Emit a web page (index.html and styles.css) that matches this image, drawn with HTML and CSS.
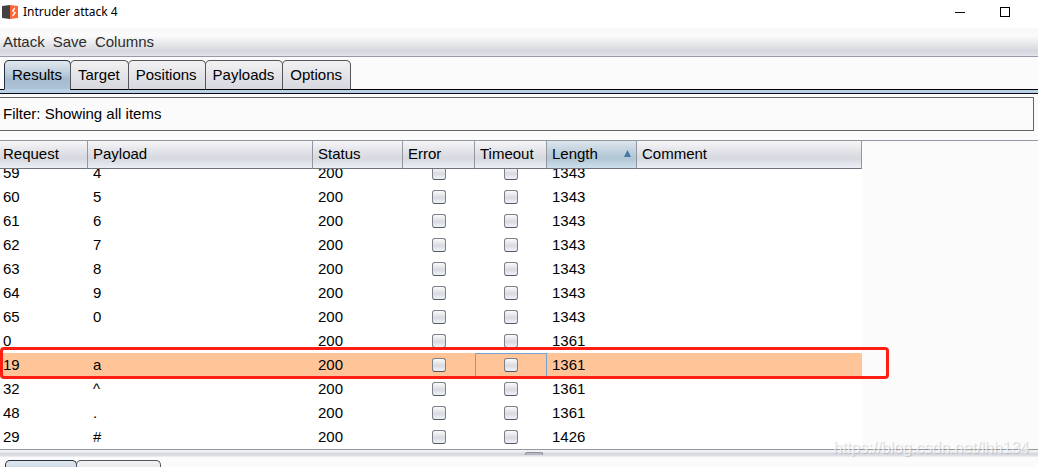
FILE: index.html
```html
<!DOCTYPE html>
<html lang="en">
<head>
<meta charset="utf-8">
<title>Intruder attack 4</title>
<link rel="stylesheet" href="styles.css">
</head>
<body>
<div class="window">
  <header class="titlebar">
    <svg class="logo" width="16" height="14" viewBox="0 0 16 14" aria-hidden="true">
      <path d="M0 1 8 0V14L0 13Z" fill="#434142"/>
      <path d="M8 0 16 1V13L8 14Z" fill="#ff6633"/>
      <path d="M12.5 2 9.8 6.2 12.2 7.2 10.6 9.2V12L14.2 7.4 11.4 6.2 13 4Z" fill="#fff"/>
    </svg>
    <h1 class="title">Intruder attack 4</h1>
    <div class="controls">
      <button class="control" aria-label="Minimize"><svg width="10" height="10"><path d="M0 5.5H10" stroke="#000"/></svg></button>
      <button class="control" aria-label="Maximize"><svg width="10" height="10"><rect x=".5" y=".5" width="9" height="9" fill="none" stroke="#000"/></svg></button>
    </div>
  </header>
  <nav class="menubar">
    <button class="menu">Attack</button>
    <button class="menu">Save</button>
    <button class="menu">Columns</button>
  </nav>
  <div class="tabs" role="tablist">
    <button class="tab selected" role="tab" aria-selected="true">Results</button>
    <button class="tab" role="tab">Target</button>
    <button class="tab" role="tab">Positions</button>
    <button class="tab" role="tab">Payloads</button>
    <button class="tab" role="tab">Options</button>
  </div>
  <button class="filter">Filter: Showing all items</button>
  <main class="results">
    <table class="grid">
      <colgroup><col class="c-request"><col class="c-payload"><col class="c-status"><col class="c-flag"><col class="c-flag"><col class="c-length"><col class="c-comment"></colgroup>
      <thead>
        <tr><th>Request</th><th>Payload</th><th>Status</th><th>Error</th><th>Timeout</th><th class="sorted" aria-sort="ascending"><span class="sort">Length<svg width="7" height="7" aria-hidden="true"><path d="M3.5 0 7 7H0Z" fill="#4377a8"/></svg></span></th><th>Comment</th></tr>
      </thead>
      <tbody>
        <tr class="clipped"><td><div class="clip">59</div></td><td><div class="clip">4</div></td><td><div class="clip">200</div></td><td><div class="clip flag"><input type="checkbox" aria-label="Error"></div></td><td><div class="clip flag"><input type="checkbox" aria-label="Timeout"></div></td><td><div class="clip">1343</div></td><td></td></tr>
        <tr><td>60</td><td>5</td><td>200</td><td class="flag"><input type="checkbox" aria-label="Error"></td><td class="flag"><input type="checkbox" aria-label="Timeout"></td><td>1343</td><td></td></tr>
        <tr><td>61</td><td>6</td><td>200</td><td class="flag"><input type="checkbox" aria-label="Error"></td><td class="flag"><input type="checkbox" aria-label="Timeout"></td><td>1343</td><td></td></tr>
        <tr><td>62</td><td>7</td><td>200</td><td class="flag"><input type="checkbox" aria-label="Error"></td><td class="flag"><input type="checkbox" aria-label="Timeout"></td><td>1343</td><td></td></tr>
        <tr><td>63</td><td>8</td><td>200</td><td class="flag"><input type="checkbox" aria-label="Error"></td><td class="flag"><input type="checkbox" aria-label="Timeout"></td><td>1343</td><td></td></tr>
        <tr><td>64</td><td>9</td><td>200</td><td class="flag"><input type="checkbox" aria-label="Error"></td><td class="flag"><input type="checkbox" aria-label="Timeout"></td><td>1343</td><td></td></tr>
        <tr><td>65</td><td>0</td><td>200</td><td class="flag"><input type="checkbox" aria-label="Error"></td><td class="flag"><input type="checkbox" aria-label="Timeout"></td><td>1343</td><td></td></tr>
        <tr><td>0</td><td></td><td>200</td><td class="flag"><input type="checkbox" aria-label="Error"></td><td class="flag"><input type="checkbox" aria-label="Timeout"></td><td>1361</td><td></td></tr>
        <tr class="picked"><td>19</td><td>a</td><td>200</td><td class="flag"><input type="checkbox" aria-label="Error"></td><td class="flag focused"><input type="checkbox" aria-label="Timeout"></td><td>1361</td><td></td></tr>
        <tr><td>32</td><td>^</td><td>200</td><td class="flag"><input type="checkbox" aria-label="Error"></td><td class="flag"><input type="checkbox" aria-label="Timeout"></td><td>1361</td><td></td></tr>
        <tr><td>48</td><td>.</td><td>200</td><td class="flag"><input type="checkbox" aria-label="Error"></td><td class="flag"><input type="checkbox" aria-label="Timeout"></td><td>1361</td><td></td></tr>
        <tr><td>29</td><td>#</td><td>200</td><td class="flag"><input type="checkbox" aria-label="Error"></td><td class="flag"><input type="checkbox" aria-label="Timeout"></td><td>1426</td><td></td></tr>
      </tbody>
    </table>
    <div class="marker"></div>
  </main>
  <div class="splitter"><span class="grip"></span></div>
  <div class="lower">
    <button class="tab selected stub" aria-label="Request"></button>
    <button class="tab stub wide" aria-label="Response"></button>
  </div>
  <div class="watermark">https://blog.csdn.net/lhh134</div>
</div>
</body>
</html>
```

FILE: styles.css
```css
* { box-sizing: border-box; }

body {
  margin: 0;
  overflow: hidden;
  background: #fbfbfb;
  color: #000;
  font: 15px/24px "Liberation Sans", Arial, sans-serif;
}

button {
  margin: 0;
  padding: 0;
  border: 0;
  background: none;
  color: inherit;
  font: inherit;
}

.window {
  position: relative;
  min-height: 100vh;
}

.titlebar {
  display: flex;
  align-items: center;
  gap: 5px;
  height: 28px;
  padding: 0 28px 4px 2px;
  background: #fff;
}

.title {
  margin: 0;
  font: 12px/24px "Noto Sans", sans-serif;
}

.controls {
  display: flex;
  gap: 35px;
  margin-left: auto;
}

.control {
  display: flex;
}

.menubar {
  display: flex;
  gap: 8px;
  height: 29px;
  padding: 2px 3px;
  border-bottom: 1px solid #9a99aa;
  background: linear-gradient(#f7f7f7, #fbfbfb 28%, #d5d8de 80%, #d9dce2 92%, #e6e6f0);
  color: #2c2c2c;
}

.tabs {
  display: flex;
  height: 37px;
  padding: 3px 4px 0;
  background: linear-gradient(transparent 32px, #000 32px, #000 33px, #b8cfe5 33px, #b8cfe5 36px, #0a0a14 36px);
}

.tab {
  height: 30px;
  margin-right: -1px;
  padding: 0 8px 0 7px;
  border: 1px solid #55555d;
  border-bottom-color: #000;
  border-radius: 5px 5px 0 0;
  background: linear-gradient(#f2f2f4, #e4e4e8 50%, #d6d9df);
}

.tab.selected {
  border-color: #22303f;
  border-bottom-color: #b8cfe5;
  background: linear-gradient(#e1e8ee, #bccddb 45%, #a5bccf 65%, #adc3d8);
}

.filter {
  display: block;
  width: calc(100% - 4px);
  height: 34px;
  margin: 3px 4px 9px 0;
  padding: 0 3px;
  border: 1px solid #646464;
  border-left: 0;
  text-align: left;
}

.results {
  position: relative;
  border-top: 1px solid #9297a1;
  border-bottom: 1px solid #9297a1;
}

.grid {
  width: 862px;
  border-collapse: separate;
  border-spacing: 0;
  table-layout: fixed;
  background: #fff;
}

.c-request { width: 88px; }
.c-payload { width: 225px; }
.c-status, .c-length { width: 90px; }
.c-flag { width: 72px; }

th {
  height: 28px;
  padding: 0 5px 2px;
  border-right: 1px solid #9297a1;
  border-bottom: 1px solid #6f737b;
  background: linear-gradient(#f6f6f8, #dfe0e5 45%, #d6d9df 65%, #eceef5);
  font-weight: normal;
  text-align: left;
}

.sorted {
  background: linear-gradient(#dce6ed, #bccddb 45%, #b1c6d4 65%, #ccdfec);
}

.sort {
  display: flex;
  align-items: center;
  justify-content: space-between;
}

td {
  height: 24px;
  padding: 0 5px;
}

th:first-child,
td:first-child {
  padding-left: 3px;
}

.clipped td {
  height: 16px;
}

.clip {
  display: flex;
  align-items: flex-end;
  height: 16px;
  overflow: hidden;
}

.flag {
  text-align: center;
  line-height: 0;
}

.clip.flag {
  justify-content: center;
  padding-bottom: 5px;
}

.flag input {
  appearance: none;
  width: 14px;
  height: 14px;
  flex: none;
  margin: 0;
  border: 1px solid #7c8089;
  border-bottom-color: #50545d;
  border-radius: 3px;
  background: linear-gradient(#fbfbfb, #dadbe0 55%, #f0f2fb);
  vertical-align: middle;
}

.picked td {
  background: #ffc599;
}

.picked .focused {
  box-shadow: inset 0 0 0 1px #73a4d1;
}

.marker {
  position: absolute;
  top: 206px;
  left: 0;
  width: 889px;
  height: 32px;
  border: 3px solid #ff1e12;
  border-radius: 4px;
}

.splitter {
  display: flex;
  justify-content: center;
  height: 7px;
  padding: 2px 0;
  background: linear-gradient(#f0f1f4 2px, #d6d9df 3px, #d6d9df 5px, #f0f1f4 7px);
}

.grip {
  width: 18px;
  height: 3px;
  margin-left: 30px;
  border: 1px solid #8d9199;
  border-bottom: 0;
  border-radius: 2px 2px 0 0;
  background: #b5b8c0;
}

.lower {
  display: flex;
  height: 10px;
  padding: 3px 5px 0;
  overflow: hidden;
}

.stub {
  width: 72px;
}

.wide {
  width: 85px;
}

.watermark {
  position: absolute;
  right: 9px;
  bottom: 7px;
  color: rgba(255, 255, 255, 0.7);
  font: 16px/24px "Liberation Sans", Arial, sans-serif;
  text-shadow: 1px 1px 1px rgba(120, 120, 120, 0.35);
}
```
